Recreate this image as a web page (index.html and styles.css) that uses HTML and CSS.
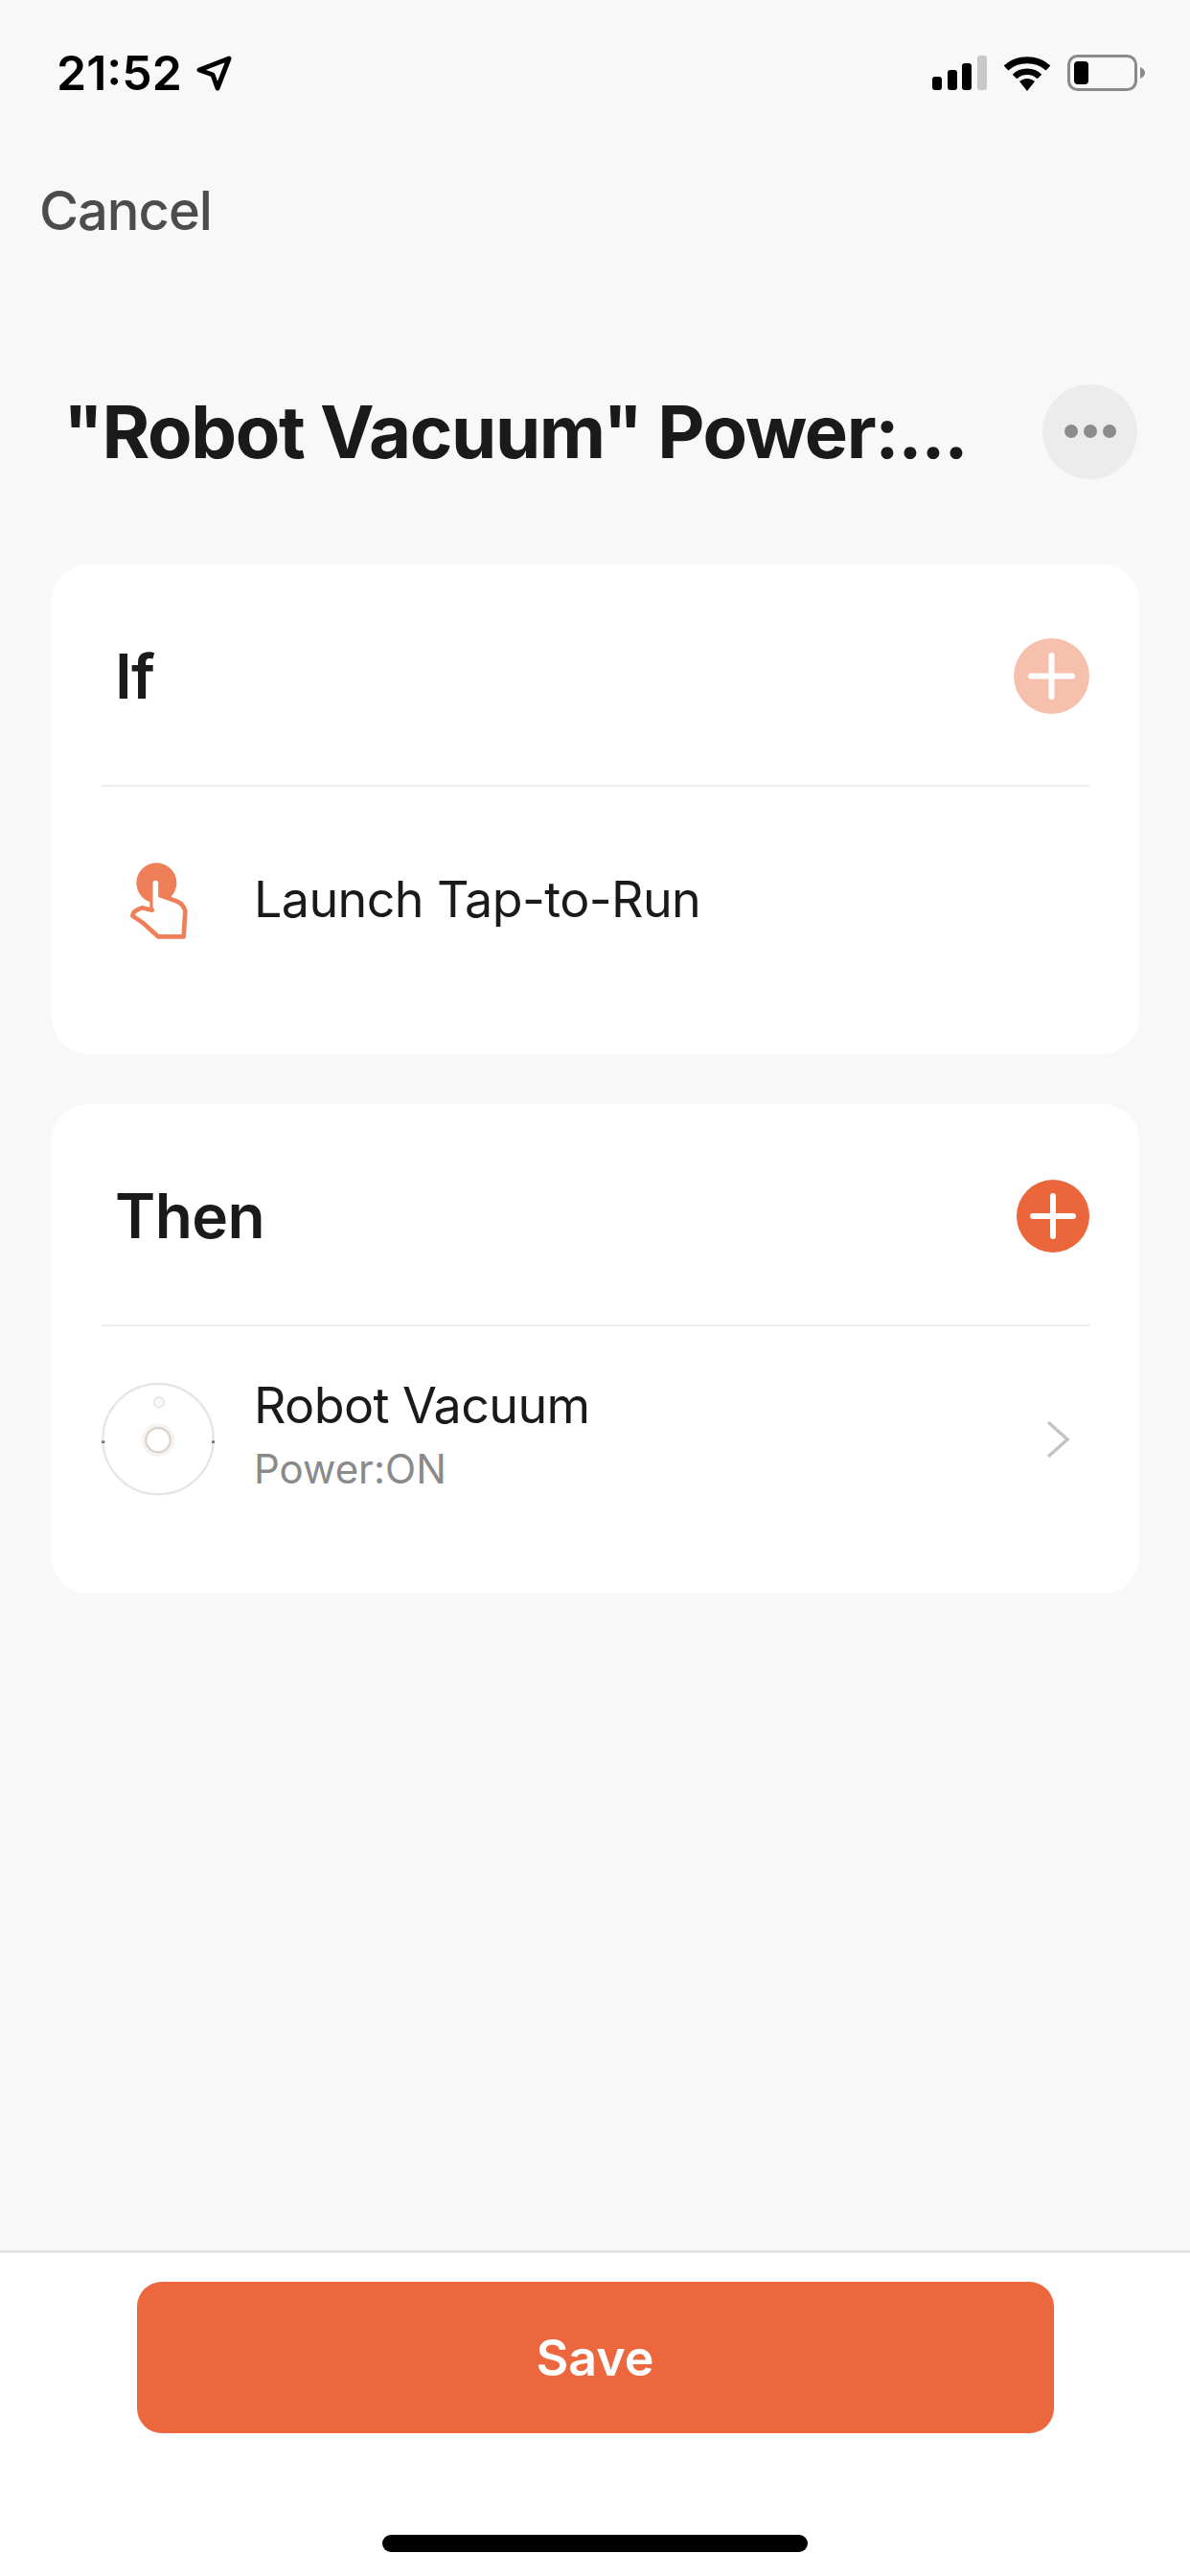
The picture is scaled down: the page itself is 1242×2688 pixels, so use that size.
FILE: index.html
```html
<!DOCTYPE html>
<html lang="en">
<head>
    <meta charset="UTF-8">
    <meta name="viewport" content="width=device-width, initial-scale=1.0">
    <title>Robot Vacuum</title>
    <link rel="stylesheet" href="styles.css">
</head>
<body>
    <div class="page">
        <!-- Status bar -->
        <div class="status">
            <div class="status-time">
                <span>21:52</span>
                <svg class="arrow" width="37" height="37" viewBox="0 0 37 37">
                    <path d="M3 15 L34 3 L22 34 L17 20 Z" fill="none" stroke="#000" stroke-width="5" stroke-linejoin="round"/>
                </svg>
            </div>
            <div class="status-icons">
                <svg width="57" height="36" viewBox="0 0 57 36">
                    <rect x="0" y="22" width="10" height="14" rx="3" fill="#000"/>
                    <rect x="16" y="15" width="10" height="21" rx="3" fill="#000"/>
                    <rect x="31" y="8" width="10" height="28" rx="3" fill="#000"/>
                    <rect x="47" y="0" width="10" height="36" rx="3" fill="#c8c8c8"/>
                </svg>
                <svg width="50" height="37" viewBox="0 0 50 37">
                    <path d="M3 13 C15 2 35 2 47 13" fill="none" stroke="#000" stroke-width="7"/>
                    <path d="M12 22 C19 15 31 15 38 22" fill="none" stroke="#000" stroke-width="6.5"/>
                    <path d="M17 27 C22 23 28 23 33 27 L25 37 Z" fill="#000"/>
                </svg>
                <svg width="81" height="38" viewBox="0 0 81 38">
                    <rect x="1.5" y="1.5" width="70" height="35" rx="9" fill="none" stroke="#8a8a8a" stroke-width="3"/>
                    <rect x="7" y="7" width="15" height="24" rx="4" fill="#000"/>
                    <path d="M76 13 C80 15 81 17 81 19 C81 21 80 23 76 25 Z" fill="#8a8a8a"/>
                </svg>
            </div>
        </div>

        <div class="cancel">Cancel</div>

        <div class="title-row">
            <h1>"Robot Vacuum" Power:...</h1>
            <div class="more"><i></i><i></i><i></i></div>
        </div>

        <!-- If -->
        <div class="card">
            <div class="card-head">
                <h2>If</h2>
                <svg class="add add-off" width="79" height="79" viewBox="0 0 79 79">
                    <circle cx="39.5" cy="39.5" r="39.5"/>
                    <path d="M39.5 18 V61 M18 39.5 H61" stroke="#fff" stroke-width="6" stroke-linecap="round"/>
                </svg>
            </div>
            <div class="card-row">
                <svg class="thumb" viewBox="-12 3 354 354">
                    <circle cx="160" cy="127" r="63" fill="#ee7f58"/>
                    <path d="M146 125 L146 212 L115 205 Q85 215 85 230 L115 250 L165 295 H245 L250 215 Q245 195 225 185 L170 165 L170 125 Q158 100 146 125 Z" fill="#fff" stroke="#ee7f58" stroke-width="14" stroke-linejoin="round"/>
                    <path d="M157 128 V200" stroke="#fff" stroke-width="17" stroke-linecap="round"/>
                </svg>
                <div class="row-text">
                    <div class="row-name">Launch Tap-to-Run</div>
                </div>
            </div>
        </div>

        <!-- Then -->
        <div class="card">
            <div class="card-head">
                <h2>Then</h2>
                <svg class="add" width="76" height="76" viewBox="0 0 76 76">
                    <circle cx="38" cy="38" r="38"/>
                    <path d="M38 17 V59 M17 38 H59" stroke="#fff" stroke-width="6" stroke-linecap="round"/>
                </svg>
            </div>
            <div class="card-row">
                <svg class="thumb" viewBox="48 69 354 354">
                    <circle cx="225" cy="245" r="173" fill="#fff" stroke="#e6e6e6" stroke-width="7"/>
                    <circle cx="225" cy="248" r="52" fill="#f6f4f3"/>
                    <circle cx="225" cy="248" r="38" fill="#fff" stroke="#dcd3cb" stroke-width="7"/>
                    <circle cx="228" cy="130" r="16" fill="#f8f8f8" stroke="#e2e2e2" stroke-width="4"/>
                    <rect x="48" y="250" width="10" height="8" fill="#777"/>
                    <rect x="393" y="250" width="10" height="8" fill="#777"/>
                </svg>
                <div class="row-text">
                    <div class="row-name">Robot Vacuum</div>
                    <div class="row-sub">Power:ON</div>
                </div>
                <svg class="chevron" width="26" height="40" viewBox="0 0 26 40">
                    <path d="M3 2 L23 20 L3 38" fill="none" stroke="#c4c4c4" stroke-width="3.5"/>
                </svg>
            </div>
        </div>

        <div class="spacer"></div>

        <div class="footer">
            <button class="save">Save</button>
            <div class="home-bar"></div>
        </div>
    </div>
</body>
</html>
```
FILE: styles.css
```css
body {
    font-family: 'Inter', 'Liberation Sans', sans-serif;
    background-color: #f8f8f8;
    margin: 0;
    padding: 0;
    color: #1a1a1a;
}
.page {
    width: 1242px;
    height: 2688px;
    display: flex;
    flex-direction: column;
    overflow: hidden;
}
.status {
    height: 152px;
    flex: none;
    display: flex;
    align-items: center;
    justify-content: space-between;
    padding: 0 47px 0 59px;
}
.status-time {
    display: flex;
    align-items: center;
    gap: 15px;
    font-size: 50px;
    font-weight: 600;
    color: #000;
}
.status-icons {
    display: flex;
    align-items: center;
    gap: 17px;
}
.cancel {
    height: 64px;
    line-height: 64px;
    margin-top: 36px;
    padding-left: 41px;
    font-size: 56px;
    font-weight: 500;
    letter-spacing: -1px;
    color: #4c4c4c;
    flex: none;
}
.title-row {
    flex: none;
    display: flex;
    align-items: center;
    justify-content: space-between;
    height: 100px;
    margin-top: 148px;
    padding: 0 55px 0 66px;
}
h1 {
    margin: 0;
    font-size: 76px;
    font-weight: 700;
    letter-spacing: -1.4px;
    white-space: nowrap;
}
.more {
    width: 99px;
    height: 99px;
    border-radius: 50%;
    background-color: #ececec;
    display: flex;
    align-items: center;
    justify-content: center;
    gap: 6px;
}
.more i {
    width: 14px;
    height: 14px;
    border-radius: 50%;
    background-color: #8c8c8c;
}
.card {
    flex: none;
    width: 1135px;
    height: 511px;
    margin-left: 54px;
    box-sizing: border-box;
    padding: 0 52px;
    background-color: #fff;
    border-radius: 38px;
}
.title-row + .card {
    margin-top: 89px;
}
.card + .card {
    margin-top: 52px;
}
.card-head {
    height: 232px;
    box-sizing: border-box;
    display: flex;
    align-items: center;
    justify-content: space-between;
    padding-top: 3px;
    border-bottom: 2px solid #eeeeee;
}
h2 {
    margin: 0;
    padding-left: 14px;
    font-size: 64px;
    font-weight: 600;
    letter-spacing: -0.6px;
}
.add {
    fill: #ec663c;
}
.add-off {
    fill: #f6c0ad;
}
.card-row {
    display: flex;
    align-items: center;
    gap: 41px;
    height: 118px;
    margin-top: 59px;
}
.thumb {
    width: 118px;
    height: 118px;
    flex: none;
}
.row-text {
    flex: 1;
}
.row-name {
    font-size: 52px;
    line-height: 62px;
    letter-spacing: -0.6px;
}
.row-sub {
    font-size: 42px;
    line-height: 50px;
    margin-top: 10px;
    color: #8a8a8a;
}
.card-row .row-text:nth-last-child(2) {
    margin-top: -10px;
}
.chevron {
    flex: none;
    margin-right: 20px;
}
.spacer {
    flex: 1;
}
.footer {
    flex: none;
    height: 340px;
    box-sizing: border-box;
    background-color: #fff;
    border-top: 3px solid #e4e4e4;
    display: flex;
    flex-direction: column;
    align-items: center;
    padding-top: 30px;
}
.save {
    width: 957px;
    height: 158px;
    border: none;
    border-radius: 26px;
    background-color: #ec673e;
    color: #fff;
    font-family: inherit;
    font-size: 52px;
    font-weight: 600;
}
.home-bar {
    width: 444px;
    height: 18px;
    margin-top: 106px;
    border-radius: 9px;
    background-color: #000;
}
```
